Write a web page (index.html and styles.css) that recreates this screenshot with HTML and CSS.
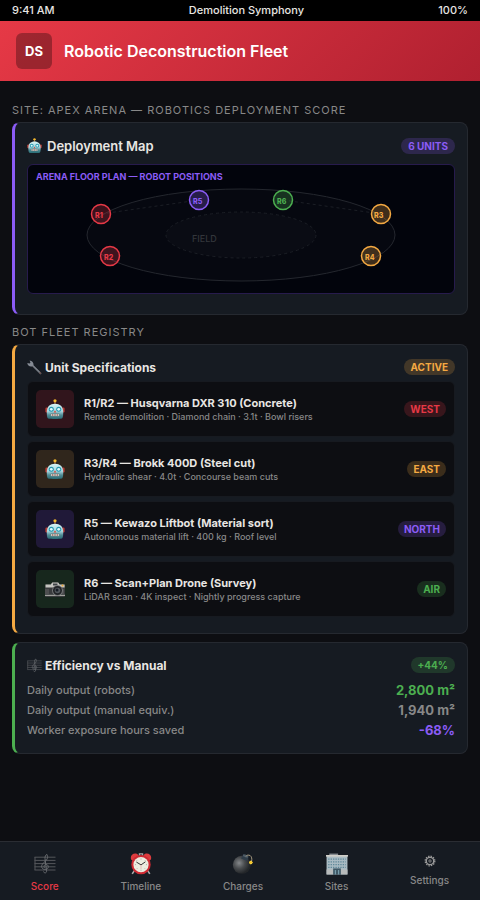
FILE: index.html
```html
<!DOCTYPE html>
<html lang="en">
<head>
    <meta charset="UTF-8">
    <meta name="viewport" content="width=device-width, initial-scale=1.0">
    <title>Demolition Symphony</title>
    <link rel="stylesheet" href="styles.css">
</head>
<body>
    <svg class="sprite" aria-hidden="true">
        <defs>
            <linearGradient id="metal" x1="0" y1="0" x2="0" y2="1">
                <stop offset="0" stop-color="#d5f3f5"/>
                <stop offset="0.5" stop-color="#a4d3da"/>
                <stop offset="0.75" stop-color="#4f8992"/>
                <stop offset="1" stop-color="#286d76"/>
            </linearGradient>
            <radialGradient id="iron" cx="0.35" cy="0.4" r="0.6">
                <stop offset="0" stop-color="#85888b"/>
                <stop offset="0.5" stop-color="#4a4d50"/>
                <stop offset="1" stop-color="#232629"/>
            </radialGradient>
        </defs>
        <symbol id="robot" viewBox="0 0 20 20">
            <path d="M10 2v4" stroke="#8d5b38" stroke-width="1.4"/>
            <circle cx="10" cy="1.8" r="1.6" fill="#f5b92e"/>
            <rect x="0.4" y="8.5" width="3" height="5" rx="1.2" fill="#b83f38"/>
            <rect x="16.6" y="8.5" width="3" height="5" rx="1.2" fill="#b83f38"/>
            <path d="M3 19.500c-1-1-1.200-3-1.200-6C1.800 7.500 5 4.800 10 4.800s8.200 2.700 8.200 8.700c0 3-.2 5-1.200 6-3 .6-11 .6-14 0z" fill="url(#metal)"/>
            <circle cx="6.300" cy="10.300" r="2.500" fill="#2698b0"/>
            <circle cx="13.700" cy="10.300" r="2.500" fill="#2698b0"/>
            <circle cx="6.300" cy="10.300" r="1.400" fill="#dffcff"/>
            <circle cx="13.700" cy="10.300" r="1.400" fill="#dffcff"/>
            <path d="M10 11.200l1.300 2.300H8.700z" fill="#d94436"/>
            <rect x="5.500" y="14.800" width="9" height="2.400" rx="1" fill="#e8e4dc" stroke="#38646b" stroke-width="0.6"/>
            <path d="M7.700 15v2M10 15v2M12.300 15v2" stroke="#894940" stroke-width="0.7"/>
        </symbol>
        <symbol id="wrench" viewBox="0 0 20 20">
            <path d="M6.500 6.500l11.500 11.300" stroke="#60666e" stroke-width="2.600" stroke-linecap="round"/>
            <path d="M6.500 6l10.500 10.300" stroke="#a4aab2" stroke-width="0.900"/>
            <path d="M3.500.500l1.100 3-1 1.200-3.200-.8C.8 7 3.200 9.200 6.500 8.600L8.700 6.500C9 3.500 7 .8 3.500.500z" fill="#858b94"/>
            <circle cx="17.600" cy="17.500" r="1.100" fill="#6d4945"/>
        </symbol>
        <symbol id="camera" viewBox="0 0 22 20">
            <path d="M2 5.500h5l1.300-2h6l1.400 2H20q1 0 1 1v10q0 1.500-1 1.500H2q-1 0-1-1.500v-10q0-1 1-1z" fill="#393b3d"/>
            <path d="M1.500 5.600h5.300l1.400-2h6l1.400 2h5v3h-19z" fill="#c5c5c0"/>
            <path d="M1 15.800h20V17H1z" fill="#a0a19c"/>
            <path d="M2 10v5M4 10v5M19 10v5" stroke="#777" stroke-width="0.7"/>
            <rect x="9" y="4.500" width="4.500" height="2" fill="#404548"/>
            <circle cx="13.500" cy="11.500" r="5.400" fill="#77797a"/>
            <circle cx="13.500" cy="11.500" r="4.500" fill="#202326"/>
            <circle cx="13.500" cy="11.500" r="2.800" fill="#52585d"/>
            <circle cx="13" cy="11" r="1.500" fill="#151b23"/>
            <circle cx="18.500" cy="6.500" r="1" fill="#ecaa36"/>
        </symbol>
        <symbol id="score" viewBox="0 0 22 20">
            <path d="M.5 3.200h21M.5 6.400h21M.5 9.600h21M.5 12.800h21M.5 16h21M1 3v13" stroke="#54575b" stroke-width="1" fill="none"/>
            <path d="M9.500 17.500c.5 2 3.300 1.800 3.100-.6L11 4.500c-.2-2 .7-3.800 2-4 1.400 2.500.3 5-2 7-3.200 2.500-4.300 5-2.500 7 2.400 2.200 6 .7 5.800-2-.3-2.600-4.200-2.600-4.300.1 0 .9.700 1.600 1.400 1.600" fill="none" stroke="#696c70" stroke-width="1"/>
        </symbol>
        <symbol id="clock" viewBox="0 0 20 20">
            <path d="M4 16l-2 3M16 16l2 3" stroke="#aaa" stroke-width="1.500"/>
            <path d="M1 6C-.2 2.200 2.800-.3 6.500.8L8 2 2.500 7zM19 6c1.200-3.800-1.800-6.300-5.500-5.200L12 2l5.500 5z" fill="#dc3c3e"/>
            <path d="M8.500 2.500V.8h3v1.700" stroke="#aaa" fill="none"/>
            <circle cx="10" cy="10.600" r="8.800" fill="#ce2932"/>
            <circle cx="10" cy="10.600" r="6.900" fill="#ececdf"/>
            <path d="M10 5v1M10 15.200v1M4.500 10.600h1M14.500 10.600h1M6 6.600l.6.600M14 6.600l-.6.600M6 14.600l.6-.6M14 14.600l-.6-.6" stroke="#999" stroke-width="0.7"/>
            <path d="M5.800 8.200l4.200 2.600L14 8" stroke="#333" stroke-width="0.900" fill="none"/>
            <path d="M10 10.600v4" stroke="#d99" stroke-width="0.500"/>
        </symbol>
        <symbol id="bomb" viewBox="0 0 22 20">
            <circle cx="9.800" cy="10.800" r="9" fill="url(#iron)"/>
            <path d="M11 1l5.500 2.500-1 3.500L9 4.500z" fill="#2f3d49"/>
            <ellipse cx="13.600" cy="2" rx="3" ry="1.300" transform="rotate(20 13.600 2)" fill="#4d5b66"/>
            <path d="M14 2.500c.5-1.500 2.500-1.800 4.200-.9 1.500 1 1.900 3.200 1.400 5.400" fill="none" stroke="#a69a80" stroke-width="1"/>
            <circle cx="18.800" cy="8.500" r="1.700" fill="#ffe14a"/>
            <path d="M17 8.500h3.800M18.800 6.700v3.600" stroke="#f3bd25" stroke-width="0.700"/>
        </symbol>
        <symbol id="building" viewBox="0 0 20 20">
            <path d="M3 .5h8V3H3z" fill="#858b90"/>
            <path d="M.5 2.500h19V19.500H.5z" fill="#a9bbc3"/>
            <path d="M0 1.800h20v1.500H0z" fill="#d0cec8"/>
            <path d="M2 5.500h16M2 8h16M2 10.500h16M2 13h16" stroke="#5e8798" stroke-width="1.200" stroke-dasharray="1.200 1"/>
            <path d="M.5 15h6v4.500h-6zM13.500 15h6v4.500h-6z" fill="#b8bbbb"/>
            <path d="M6.500 14h7v5.500h-7z" fill="#3f5865"/>
            <path d="M8.500 15.500v4M11.500 15.500v4" stroke="#8ab3c2" stroke-width="0.800"/>
        </symbol>
        <symbol id="gear" viewBox="0 0 12 12">
            <circle cx="6" cy="6" r="4.800" fill="none" stroke="#999" stroke-width="1.300" stroke-dasharray="1.400 1.110"/>
            <circle cx="6" cy="6" r="3.700" fill="none" stroke="#999" stroke-width="1.300"/>
            <circle cx="6" cy="6" r="1.200" fill="none" stroke="#999" stroke-width="0.800"/>
        </symbol>
    </svg>

    <div class="status-bar">
        <span>9:41 AM</span>
        <span>Demolition Symphony</span>
        <span>100%</span>
    </div>

    <header class="header">
        <div class="logo">DS</div>
        <h1>Robotic Deconstruction Fleet</h1>
    </header>

    <main class="content">
        <h2 class="section-title">Site: Apex Arena — Robotics Deployment Score</h2>
        <section class="card purple">
            <div class="card-header map-header">
                <h3 class="card-title large"><svg class="emoji"><use href="#robot"/></svg>Deployment Map</h3>
                <span class="badge badge-purple">6 UNITS</span>
            </div>
            <div class="map">
                <svg class="floor-plan" viewBox="0 0 426 128">
                    <ellipse class="arena" cx="213" cy="70" rx="154" ry="46"/>
                    <ellipse class="field" cx="213" cy="70" rx="75" ry="23"/>
                    <path class="route" d="M73 49L171 35M255 35L353 49"/>
                    <text class="map-title" x="8" y="15">ARENA FLOOR PLAN — ROBOT POSITIONS</text>
                    <text class="field-label" x="164" y="77">FIELD</text>
                    <g class="bot red"><circle cx="73" cy="49" r="9.500"/><text x="67" y="53">R1</text></g>
                    <g class="bot red"><circle cx="82" cy="91" r="9.500"/><text x="76" y="95">R2</text></g>
                    <g class="bot amber"><circle cx="353" cy="49" r="9.500"/><text x="346" y="53">R3</text></g>
                    <g class="bot amber"><circle cx="343" cy="91" r="9.500"/><text x="337" y="95">R4</text></g>
                    <g class="bot violet"><circle cx="171" cy="35" r="9.500"/><text x="165" y="39">R5</text></g>
                    <g class="bot green"><circle cx="255" cy="35" r="9.500"/><text x="249" y="39">R6</text></g>
                </svg>
            </div>
        </section>

        <h2 class="section-title">Bot Fleet Registry</h2>
        <section class="card amber">
            <div class="card-header">
                <h3 class="card-title"><svg class="emoji"><use href="#wrench"/></svg>Unit Specifications</h3>
                <span class="badge badge-amber">ACTIVE</span>
            </div>
            <div class="unit">
                <div class="unit-icon bg-red"><svg><use href="#robot"/></svg></div>
                <div class="unit-info">
                    <div class="unit-name">R1/R2 — Husqvarna DXR 310 (Concrete)</div>
                    <div class="unit-detail">Remote demolition · Diamond chain · 3.1t · Bowl risers</div>
                </div>
                <span class="badge badge-red">WEST</span>
            </div>
            <div class="unit">
                <div class="unit-icon bg-amber"><svg><use href="#robot"/></svg></div>
                <div class="unit-info">
                    <div class="unit-name">R3/R4 — Brokk 400D (Steel cut)</div>
                    <div class="unit-detail">Hydraulic shear · 4.0t · Concourse beam cuts</div>
                </div>
                <span class="badge badge-amber">EAST</span>
            </div>
            <div class="unit">
                <div class="unit-icon bg-purple"><svg><use href="#robot"/></svg></div>
                <div class="unit-info">
                    <div class="unit-name">R5 — Kewazo Liftbot (Material sort)</div>
                    <div class="unit-detail">Autonomous material lift · 400 kg · Roof level</div>
                </div>
                <span class="badge badge-purple">NORTH</span>
            </div>
            <div class="unit">
                <div class="unit-icon bg-green"><svg class="wide"><use href="#camera"/></svg></div>
                <div class="unit-info">
                    <div class="unit-name">R6 — Scan+Plan Drone (Survey)</div>
                    <div class="unit-detail">LiDAR scan · 4K inspect · Nightly progress capture</div>
                </div>
                <span class="badge badge-green">AIR</span>
            </div>
        </section>

        <section class="card green">
            <div class="card-header">
                <h3 class="card-title"><svg class="emoji"><use href="#score"/></svg>Efficiency vs Manual</h3>
                <span class="badge badge-green">+44%</span>
            </div>
            <dl class="metrics">
                <div class="metric"><dt>Daily output (robots)</dt><dd class="text-green">2,800 m²</dd></div>
                <div class="metric"><dt>Daily output (manual equiv.)</dt><dd>1,940 m²</dd></div>
                <div class="metric"><dt>Worker exposure hours saved</dt><dd class="text-purple">-68%</dd></div>
            </dl>
        </section>
    </main>

    <nav class="bottom-nav">
        <a href="#" class="nav-item active"><svg><use href="#score"/></svg>Score</a>
        <a href="#" class="nav-item"><svg><use href="#clock"/></svg>Timeline</a>
        <a href="#" class="nav-item"><svg><use href="#bomb"/></svg>Charges</a>
        <a href="#" class="nav-item"><svg><use href="#building"/></svg>Sites</a>
        <a href="#" class="nav-item"><svg class="small"><use href="#gear"/></svg>Settings</a>
    </nav>
</body>
</html>
```
FILE: styles.css
```css
:root {
    --red: #e63946;
    --amber: #f4a942;
    --purple: #8b5cf6;
    --green: #4caf50;
    --bg: #0d0e12;
    --card: #161b22;
    --text: #e8e6e3;
    --muted: #888;
}

* {
    margin: 0;
    padding: 0;
    box-sizing: border-box;
}

body {
    min-height: 100vh;
    display: flex;
    flex-direction: column;
    background: var(--bg);
    color: var(--text);
    font-family: Inter, 'Liberation Sans', sans-serif;
}

.sprite {
    position: absolute;
    width: 0;
    height: 0;
}

.status-bar {
    display: flex;
    justify-content: space-between;
    padding: 3px 12px;
    background: #000;
    font-size: 11px;
    line-height: 15px;
    font-weight: 500;
}

.header {
    display: flex;
    align-items: center;
    gap: 12px;
    padding: 12px 16px;
    background: linear-gradient(135deg, var(--red), #b02030);
    color: #fff;
}

.header h1 {
    font-size: 16px;
    font-weight: 600;
}

.logo {
    width: 36px;
    height: 36px;
    display: flex;
    align-items: center;
    justify-content: center;
    border-radius: 6px;
    background: rgba(0, 0, 0, 0.3);
    font-size: 13px;
    font-weight: 700;
}

.content {
    flex: 1;
    padding: 20px 12px 12px;
}

.section-title {
    padding-top: 2px;
    margin-bottom: 4px;
    color: var(--muted);
    font-size: 11px;
    font-weight: 400;
    line-height: 15px;
    letter-spacing: 1px;
    text-transform: uppercase;
}

.card {
    background: var(--card);
    border: 1px solid #252930;
    border-left: 3px solid;
    border-radius: 8px;
    padding: 12px;
    margin-bottom: 8px;
}

.card.purple { border-left-color: var(--purple); }
.card.amber { border-left-color: var(--amber); }
.card.green { border-left-color: var(--green); }

.card-header {
    display: flex;
    align-items: center;
    justify-content: space-between;
    height: 20px;
    margin-bottom: 4px;
}

.map-header {
    height: 21px;
    margin-bottom: 8px;
}

.card-title {
    display: flex;
    align-items: center;
    gap: 3px;
    font-size: 12px;
    font-weight: 700;
}

.card-title.large {
    font-size: 13px;
    font-weight: 600;
    gap: 5px;
}

.emoji {
    width: 15px;
    height: 15px;
}

.badge {
    padding: 0 7px;
    border-radius: 8px;
    font-size: 10px;
    font-weight: 700;
    line-height: 16px;
}

.unit .badge {
    padding: 0 6px;
}

.badge-purple { color: var(--purple); background: rgba(139, 92, 246, 0.2); }
.badge-amber { color: var(--amber); background: rgba(244, 169, 66, 0.2); }
.badge-red { color: var(--red); background: rgba(230, 57, 70, 0.2); }
.badge-green { color: var(--green); background: rgba(76, 175, 80, 0.2); }

.map {
    background: #02040c;
    border: 1px solid #271b4d;
    border-radius: 6px;
    margin-bottom: 8px;
}

.floor-plan {
    display: block;
    width: 100%;
}

.arena {
    fill: rgba(255, 255, 255, 0.02);
    stroke: #24272e;
}

.field {
    fill: rgba(255, 255, 255, 0.02);
    stroke: #1b1e25;
    stroke-dasharray: 3 3;
}

.route {
    stroke: #1b1e25;
    stroke-dasharray: 3 3;
}

.map-title {
    fill: var(--purple);
    font-size: 9px;
    font-weight: 700;
}

.field-label {
    fill: #33363b;
    font-size: 9px;
    font-weight: 500;
}

.bot circle {
    fill: currentColor;
    fill-opacity: 0.25;
    stroke: currentColor;
    stroke-width: 1.5;
}

.bot text {
    fill: currentColor;
    font-size: 7px;
    font-weight: 800;
}

.bot.red { color: var(--red); }
.bot.amber { color: var(--amber); }
.bot.violet { color: var(--purple); }
.bot.green { color: var(--green); }

.unit {
    display: flex;
    align-items: center;
    gap: 10px;
    padding: 8px;
    margin-bottom: 4px;
    background: var(--bg);
    border: 1px solid #171a20;
    border-radius: 6px;
}

.unit-icon {
    width: 38px;
    height: 38px;
    display: flex;
    align-items: center;
    justify-content: center;
    border-radius: 5px;
}

.unit-icon svg {
    width: 20px;
    height: 20px;
}

.unit-icon .wide {
    width: 22px;
}

.bg-red { background: #31151c; }
.bg-amber { background: #30261c; }
.bg-purple { background: #201938; }
.bg-green { background: #17271d; }

.unit-info {
    flex: 1;
}

.unit-name {
    font-size: 11px;
    font-weight: 700;
    line-height: 14px;
}

.unit-detail {
    color: var(--muted);
    font-size: 9px;
    font-weight: 500;
    line-height: 13px;
}

.metrics {
    padding: 1px 0;
}

.metric {
    display: flex;
    align-items: center;
    justify-content: space-between;
    height: 20px;
}

.metric dt {
    color: var(--muted);
    font-size: 11px;
    font-weight: 500;
}

.metric dd {
    color: var(--muted);
    font-size: 13px;
    font-weight: 700;
}

.metric .text-green { color: var(--green); }
.metric .text-purple { color: var(--purple); }

.bottom-nav {
    display: flex;
    justify-content: space-around;
    align-items: flex-start;
    height: 59px;
    padding-top: 11px;
    background: var(--card);
    border-top: 1px solid #2a2d33;
}

.nav-item {
    display: flex;
    flex-direction: column;
    align-items: center;
    gap: 4px;
    color: var(--muted);
    font-size: 10px;
    font-weight: 500;
    line-height: 14px;
    text-decoration: none;
}

.nav-item.active {
    color: var(--red);
}

.nav-item svg {
    width: 22px;
    height: 22px;
}

.nav-item .small {
    width: 12px;
    height: 16px;
}
```
